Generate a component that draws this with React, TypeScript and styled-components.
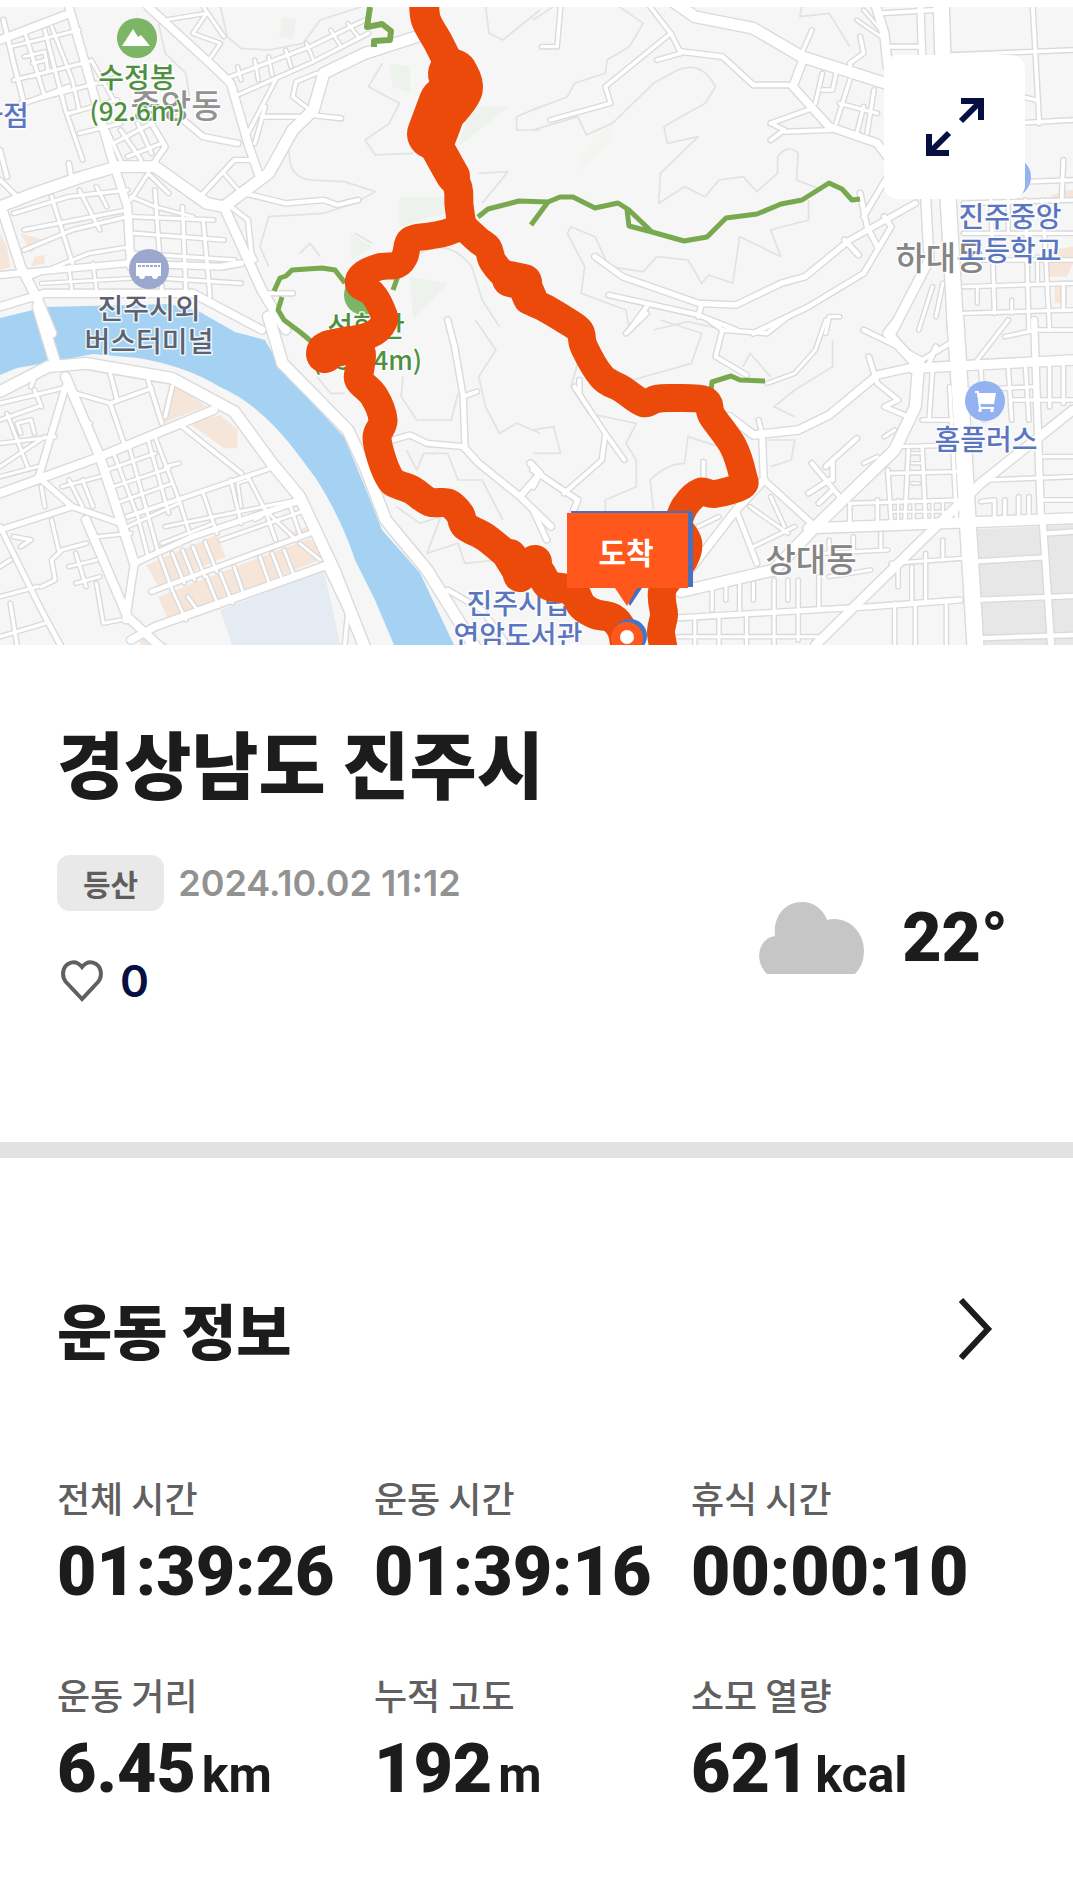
import React from "react";
import styled, { createGlobalStyle } from "styled-components";

const GlobalStyle = createGlobalStyle`
  *, *::before, *::after { box-sizing: border-box; }
  body {
    margin: 0;
    background: #fff;
    color: #1c1c1c;
    font-family: Inter, "Noto Sans CJK KR", sans-serif;
  }
  button { font: inherit; color: inherit; border: 0; background: none; padding: 0; cursor: pointer; }
  h1, h2, dl, dd, dt, p { margin: 0; }
`;

const Page = styled.main`
  padding-top: 7px;
`;

const MapPanel = styled.section`
  position: relative;
  height: 638px;
  overflow: hidden;
  background: #f6f6f6;
`;

const MapCanvas = styled.svg`
  display: block;
  width: 100%;
  height: 100%;
`;

const ExpandButton = styled.button`
  position: absolute;
  top: 48px;
  right: 48px;
  display: grid;
  place-items: center;
  width: 141px;
  height: 144px;
  border-radius: 14px;
  background: #fff;
`;

const Summary = styled.section`
  padding: 72px 65px 136px 57px;
  border-bottom: 16px solid #e2e2e2;
`;

const Title = styled.h1`
  font: 900 73px/88px "Noto Sans CJK KR", sans-serif;
`;

const SummaryBody = styled.div`
  display: flex;
  justify-content: space-between;
  align-items: center;
  margin-top: 50px;
`;

const Details = styled.div`
  display: flex;
  flex-direction: column;
  align-items: flex-start;
  gap: 45px;
`;

const Meta = styled.div`
  display: flex;
  align-items: center;
  gap: 14px;
`;

const Chip = styled.span`
  padding: 0 26px;
  border-radius: 13px;
  background: #e9e9e9;
  color: #5e5e5e;
  font: 700 30px/56px "Noto Sans CJK KR", sans-serif;
`;

const DateTime = styled.time`
  color: #929292;
  font: 600 36px/48px Inter, sans-serif;
`;

const LikeButton = styled.button`
  display: flex;
  align-items: center;
  gap: 16px;
  padding-left: 3px;
  color: #050f42;
  font: 600 44px/50px Inter, sans-serif;
`;

const Weather = styled.div`
  display: flex;
  align-items: center;
  gap: 38px;
  padding-top: 14px;
`;

const Temperature = styled.span`
  font: 900 68px/72px Roboto, sans-serif;
`;

const Workout = styled.section`
  padding: 135px 65px 72px 57px;
`;

const WorkoutHeader = styled.header`
  display: flex;
  justify-content: space-between;
  align-items: center;
`;

const Heading = styled.h2`
  font: 900 60px/72px "Noto Sans CJK KR", sans-serif;
`;

const MoreButton = styled.button`
  display: grid;
  place-items: center;
  width: 64px;
  height: 72px;
`;

const Stats = styled.dl`
  display: grid;
  grid-template-columns: repeat(3, 1fr);
  row-gap: 62px;
  margin-top: 108px;
`;

const Stat = styled.div`
  display: flex;
  flex-direction: column;
  gap: 15px;
`;

const StatLabel = styled.dt`
  color: #606060;
  font: 500 36px/48px "Noto Sans CJK KR", sans-serif;
`;

const StatValue = styled.dd`
  display: flex;
  align-items: baseline;
  gap: 6px;
  white-space: nowrap;
  font: 900 68px/72px Roboto, sans-serif;
`;

const Unit = styled.span`
  font-size: 50px;
  font-weight: 700;
`;

type Road = [width: number, d: string];
interface Tile {
  x: number;
  y: number;
  roads: Road[];
  contours: string;
  tints: [fill: string, d: string][];
}

/* Each tile covers 540 x 330 map units and keeps its own finer grid. */
const TILE_SCALE = "scale(0.3444 0.3333)";

const tiles: Tile[] = [
  {
    x: 0,
    y: 0,
    tints: [
      ["#eef2ec", "M1370,320 L1480,318 L1330,440z M1130,190 L1190,200 V280 L1140,260z M1160,590 H1290 V640 L1160,680z M1020,700 L1080,740 L1020,780z M820,50 L860,60 L850,120 L810,110z M1190,830 L1300,850 L1200,960z"],
      ["#f6e6da", "M0,700 L20,740 L30,800 L0,810z M60,700 L130,720 L90,760z M100,770 L130,765 L130,790 L90,800z"],
    ],
    contours:
      "M640,20 L660,110 L700,145 L780,150 L880,130 L930,60 L1050,20 M840,450 Q835,530 900,540 L1000,545 L1090,575 L1030,610 L940,640 L780,650 L755,740 L780,800 M1110,190 L1070,260 L1160,310 L1130,370 L1060,420 L1090,465 L1200,460 M1390,520 L1475,515 L1400,610 M1568,320 L1500,350 L1500,390 L1568,390 M1410,20 L1420,100 L1460,120 L1568,30 M1220,760 Q1300,710 1370,800 L1400,900 L1450,980 M460,70 L480,160 L540,220 L550,290 M1030,700 L1080,730 M870,760 L900,730 L930,770",
    roads: [
      [26, "M650,620 L760,870 L830,990"],
      [32, "M0,620 L100,580 L240,530 L340,500 L450,500 L600,610 L650,620"],
      [32, "M650,620 L780,520 L850,390 L910,330 L940,220 L1060,160 L1210,110"],
      [22, "M430,20 L620,200 L670,250 L720,430 L750,520"],
      [22, "M200,20 L250,200 L320,460 L370,620 L380,800"],
      [22, "M0,120 L190,45"],
      [26, "M10,640 L60,800 L110,900 L150,1000"],
      [18, "M0,825 L370,790 L640,800 L700,790"],
      [22, "M0,920 L130,880 L560,880 L760,990"],
      [12, "M10,60 L40,190 L70,310 L200,260"],
      [10, "M70,90 L130,290"],
      [10, "M130,90 L190,330 L240,480"],
      [9, "M150,80 L210,240 L230,330"],
      [9, "M30,140 L230,90"],
      [9, "M70,170 L130,155 L140,215 L90,230 M95,190 L135,180"],
      [10, "M40,240 L260,185"],
      [10, "M60,310 L280,250"],
      [10, "M200,340 L340,300"],
      [10, "M230,400 L350,370"],
      [9, "M265,180 L330,300 M290,250 L340,230"],
      [10, "M310,390 L350,480 M330,430 L440,370 M370,470 L470,430"],
      [10, "M350,390 L410,480 M400,370 L440,460"],
      [14, "M440,370 L480,440 L440,500"],
      [16, "M520,350 L590,410 L690,430"],
      [9, "M480,60 L600,40 L560,100 L640,130 L600,190"],
      [9, "M590,20 L650,110"],
      [10, "M670,230 L900,140 L1060,60"],
      [10, "M690,285 L900,190 L1070,100"],
      [8, "M690,200 L700,240 M740,180 L750,240 M780,170 L790,225 M830,150 L845,200 M890,130 L910,180 M960,90 L990,140 M1010,70 L1040,110"],
      [10, "M720,400 L800,240 M740,430 L770,320"],
      [12, "M760,350 L870,350 M900,345 L990,355"],
      [10, "M920,220 L860,245 L850,290 L900,330"],
      [12, "M590,580 L680,480 L730,480"],
      [9, "M650,520 L700,580"],
      [13, "M710,580 L830,610 L940,600 L980,615 L1040,600"],
      [12, "M670,620 L720,660 L730,760 L740,780"],
      [12, "M760,880 L850,880"],
      [12, "M0,540 L50,590 M0,450 L20,530 M200,490 L210,550"],
      [10, "M40,640 L200,590 L370,570"],
      [10, "M70,690 L370,630"],
      [10, "M70,750 L210,690 L370,650"],
      [10, "M90,830 L260,760 L380,740"],
      [10, "M150,590 L210,790"],
      [9, "M230,570 L290,690 M280,560 L310,620"],
      [10, "M380,650 L620,660 M390,700 L650,720 M390,760 L680,780 M400,830 L700,850"],
      [10, "M380,600 L430,520 L490,580 M450,570 L470,870 M530,620 L540,880 M590,660 L610,890"],
      [8, "M120,850 L380,835 M200,800 L210,880 M270,790 L280,870"],
      [9, "M380,590 L450,620 L560,650"],
    ],
  },
  {
    x: 533,
    y: 0,
    tints: [
      ["#f6e6da", "M1500,590 L1540,570 H1568 V600 H1500z M1500,750 L1568,740 V790 L1550,830 H1490z M1515,860 H1550 V910 H1515z"],
      ["#f2f5f0", "M230,360 L230,420 L120,530 L150,450z"],
    ],
    contours:
      "M0,330 L100,290 L120,250 L210,220 L215,180 L280,140 L320,70 L250,20 M0,390 L130,350 L155,405 L230,370 L350,250 L420,210 Q490,180 530,260 L500,310 L380,380 L390,430 L480,410 L370,520 L365,610 L440,560 L500,590 L540,540 L610,530 L650,575 L710,520 V470 Q740,430 770,460 L765,540 L840,570 M800,600 V660 L690,690 L720,770 L600,710 L580,850 L510,825 L490,850 L450,780 L360,770 L320,815 L220,800 L180,710 L110,680 L100,700 L150,800 L140,880 L270,930 L280,990 M780,20 L775,50 L860,40 L920,140 M0,60 L60,20 M350,990 L450,965 L560,990",
    roads: [
      [32, "M400,0 L470,50 L640,85 L780,170 L1040,255"],
      [24, "M990,0 L1020,100 L1030,200"],
      [44, "M1185,0 L1200,500 L1228,1000"],
      [22, "M780,190 L755,260 L860,380 L1000,430 L1050,500"],
      [11, "M340,20 L400,100 L210,260 L225,310 L50,360"],
      [11, "M400,100 L430,160 L360,180"],
      [14, "M430,155 L550,170 L640,255 L750,255"],
      [10, "M80,20 L70,140 L25,140"],
      [10, "M810,90 L780,160"],
      [11, "M950,110 L960,160 L920,190 L925,230"],
      [12, "M690,370 L810,325 M690,370 L730,390 L690,420 M730,395 L870,390"],
      [10, "M820,310 L840,220 M880,370 L920,240 M840,270 L870,270 L880,220 M890,310 L1000,340 M940,400 L960,320 M970,400 L990,270"],
      [12, "M1010,40 L1170,30 M1020,140 L1130,140 M1020,160 V140"],
      [18, "M1125,20 L1130,170"],
      [8, "M960,30 L1010,90 M940,60 L1010,110"],
      [11, "M1215,165 L1568,150 M1450,0 L1470,370 M1215,380 L1568,360 M1420,290 L1460,300"],
      [16, "M180,770 L260,830 L480,910 L590,915 L720,850 L790,830 L920,720 L1110,610"],
      [13, "M220,885 L480,945 L590,990 M490,910 L480,950 M330,920 L280,990"],
      [14, "M640,1000 L800,920 L960,820 L1040,680 L1020,650"],
      [14, "M1040,510 L960,650 M905,720 L945,765 M950,580 L970,680 L1000,740"],
      [26, "M1140,590 L1150,780 L1040,1000"],
      [9, "M1160,860 L1120,990 M1190,850 L1170,950"],
      [11, "M1250,610 L1568,600 M1440,545 L1568,540 M1540,480 L1535,600"],
      [10, "M1250,700 H1568 M1250,780 H1568 M1250,860 L1568,850 M1250,940 L1568,930"],
      [10, "M1330,600 L1340,940 M1430,600 L1440,990 M1480,600 L1500,990 M1540,850 V930"],
      [8, "M1290,860 V910 M1390,900 V940 M1380,600 V700 M1465,770 V850"],
      [10, "M850,1000 L860,950 L890,950"],
    ],
  },
  {
    x: 0,
    y: 320,
    tints: [
      ["#e4ebf3", "M640,870 L940,750 L990,980 L675,980z"],
      ["#f6e6da", "M550,310 L640,285 L690,330 V370 L690,385 L650,385z M500,190 L600,260 L520,290 L465,315 L480,240z M425,735 L630,645 L655,710 L460,800z M460,830 L900,655 L940,715 L490,905z M840,640 L890,620 L900,640 L850,655z M390,920 L490,975 H410z"],
    ],
    contours:
      "M1170,170 L1165,230 L1210,300 L1310,300 L1330,220 M1180,390 L1210,450 L1230,400 L1300,400 L1330,480 L1400,480 L1460,600 M1380,0 L1440,90 L1390,170 L1410,260 L1450,340 L1500,310 L1568,340 M1150,560 L1220,610 L1280,590 L1240,700 L1330,670 L1350,730 L1440,720 M920,170 L960,220 L1000,220",
    roads: [
      [32, "M780,-10 L820,130 L1010,330 L1060,440 L1120,600 L1240,750 L1300,850 L1390,1000"],
      [32, "M0,215 L140,140 L250,130 L500,175 L680,275 L790,430 L870,530 L970,750 L1060,985"],
      [30, "M110,-40 L160,130"],
      [26, "M190,170 L290,410 L350,600 L390,730"],
      [18, "M190,200 L110,480"],
      [24, "M0,520 L290,410 L620,270"],
      [16, "M0,630 L210,560 M110,470 L210,560 L350,610"],
      [14, "M0,620 L120,870 L180,985"],
      [24, "M250,600 L370,890 L470,985"],
      [20, "M390,730 L365,900"],
      [16, "M390,730 L560,650 L880,540"],
      [14, "M440,815 L660,730 L900,640"],
      [22, "M380,960 L450,920 L950,735"],
      [12, "M530,320 L700,460 M370,590 L800,440"],
      [9, "M310,450 L450,400 M330,500 L490,445 M350,545 L500,490 M370,620 L520,550"],
      [9, "M330,400 L400,590 L430,710 M375,380 L460,700 M430,360 L490,580"],
      [9, "M450,350 L520,540 L550,640 M480,440 L520,430 M590,520 L630,640 M670,480 L700,610 M720,470 L770,570 L800,660"],
      [9, "M480,620 L860,540 M470,670 L620,610 M640,660 L890,570 M780,580 L860,660 M840,550 L870,640"],
      [8, "M465,710 L500,810 M500,700 L535,790 M530,690 L565,780 M560,680 L595,770 M595,665 L630,755"],
      [8, "M500,810 L540,900 M545,830 L580,880 M600,770 L635,860 M640,760 L675,850 M680,740 L710,830 M755,710 L785,800 M790,700 L820,780 M825,690 L855,770 M870,670 L930,720"],
      [11, "M220,220 L320,250 L440,205 M320,160 L340,240 M320,250 L360,370 M430,180 L470,310 M500,200 L480,290"],
      [10, "M0,250 L180,205 M100,210 L120,260 M0,300 L110,260 M90,200 L110,150"],
      [9, "M0,440 L130,350 M0,370 L160,350 M20,280 L80,440 M60,340 L50,310 L90,300 L100,340 M0,470 L110,440"],
      [10, "M40,650 L90,660 L60,680 M120,800 L160,780 L150,720 L180,690 L250,670 M0,830 L110,800 M0,950 L130,910 M30,850 L50,980 M0,740 L30,720"],
      [9, "M200,740 L280,720 M220,790 L290,770 M280,790 L300,910 L350,900 M220,700 L250,800 M150,600 L170,690"],
      [9, "M180,500 L290,470 M240,480 L270,560 M200,480 L240,560 M280,650 L380,640 M120,500 L130,560"],
      [11, "M950,750 L1010,880 L1000,985"],
      [15, "M1140,360 L1190,345 L1240,370 L1350,380 L1345,230 L1320,80 L1300,0"],
      [12, "M1345,230 L1385,215"],
      [18, "M1350,385 L1390,430 L1510,530 L1600,620 M1510,530 L1568,460 M1540,430 L1568,460"],
      [14, "M1300,810 L1400,870 L1480,985"],
      [7, "M240,300 L265,310 M700,560 L690,490 L720,480 M740,600 L760,590"],
    ],
  },
  {
    x: 533,
    y: 320,
    tints: [["#e7e7e7", "M1285,628 L1568,615 V980 H1300z"]],
    contours:
      "M130,130 L110,200 L160,280 L300,310 L270,370 L300,420 L300,500 L210,540 V580 M350,570 L340,480 Q390,430 440,430 L450,350 L540,380 M0,330 L60,320 L80,400 L0,400 M610,140 L630,100 L690,170 M870,60 L870,140 L760,210 L700,260 L760,290 M680,360 L760,360 L750,420 L690,440 M370,0 L490,40 L460,130 L290,180",
    roads: [
      [46, "M1226,-10 L1245,300 L1262,600 L1285,985"],
      [26, "M1060,0 L1030,40 L1110,130"],
      [32, "M1120,130 L1110,260 L1050,390 L820,620 L700,750 L430,815"],
      [28, "M1100,145 L1568,120"],
      [22, "M1110,140 L1000,165 L860,285 L770,330 L640,345 L570,290"],
      [17, "M665,340 L670,480 L830,630"],
      [22, "M670,480 L590,570 L440,770"],
      [14, "M590,570 L650,730"],
      [30, "M800,625 L1568,595"],
      [26, "M820,975 L1130,660 L1300,490 L1568,270"],
      [15, "M400,895 L980,860 L1240,840"],
      [18, "M1480,600 L1505,985"],
      [13, "M1275,725 L1485,712 M1280,840 L1568,828 M1290,955 L1568,945 M1490,640 L1568,635"],
      [18, "M1455,0 L1475,600"],
      [10, "M1290,120 L1380,0 M1370,50 L1460,30 L1568,30 M1380,140 L1390,300"],
      [10, "M1300,140 L1310,300 M1260,210 L1460,200 M1390,240 H1568 M1430,140 L1440,300 M1500,130 V260 M1540,130 V250"],
      [10, "M1480,410 H1568 M1320,480 L1568,470 M1480,540 H1568 M1300,545 L1340,540 V590 M1370,540 V590 M1410,530 V590 M1440,530 V590"],
      [10, "M1130,300 H1230 M1060,380 L1240,375 M1030,460 L1245,455 M920,550 L1250,540"],
      [10, "M1130,380 L1140,600 M1030,450 L1040,600 M1090,390 L1080,600 M1160,150 L1150,300 M1210,200 L1230,600 M920,550 V620 M1000,540 V600"],
      [6, "M1040,575 H1230 M1100,400 H1125 M1100,430 H1125 M1100,490 H1120 M1060,540 V600 M1105,540 V600 M1160,540 V600 M1190,540 V600"],
      [13, "M960,30 L1040,70 L1130,120 L1210,70 M1150,130 L1170,80"],
      [13, "M975,110 L1000,190 L1060,240 L1020,260 L1090,290"],
      [12, "M270,40 L330,-20 M510,0 L550,30 L680,40 L740,-10 M550,30 L530,110 L620,165"],
      [9, "M850,0 L820,90 L760,160 L680,190"],
      [12, "M120,200 L210,340 L200,420 L90,520 M210,340 L265,420 M135,180 V220"],
      [15, "M0,450 L130,540 L110,590 M0,500 L20,460 M0,570 L40,660"],
      [11, "M495,425 V490 M655,300 L665,340"],
      [13, "M810,430 L890,530 M850,440 L870,420 L940,355 M870,420 L870,480 M800,520 L860,480 M830,550 L870,510"],
      [9, "M960,430 L1000,410 M1020,350 L1050,330 M480,620 L540,590 M630,560 L740,640 M640,680 L760,620 M690,530 L730,620"],
      [9, "M520,800 V870 M600,790 V870 M700,780 V880 M770,780 V870 M830,770 V860 M560,840 V800 M640,840 V790 M740,840 V780 M860,770 L980,750"],
      [9, "M420,950 H830 M470,890 V985 M540,890 V985 M620,880 V985 M700,880 V985 M770,880 V960"],
      [9, "M840,700 L1030,690 M860,660 V700 M930,650 V695 M1010,640 V690 M1040,730 L1250,715 M1060,740 V800 M1100,740 V840 M1140,700 V840 M1190,660 V720 M1050,850 V985 M1110,850 V985 M1200,850 V985"],
    ],
  },
];

const tileTransform = (t: Tile) => `translate(${t.x} ${t.y}) ${TILE_SCALE}`;

/* Turns a list of track points into a Catmull-Rom curve. */
const smoothTrack = (points: string) => {
  const p = points.split(" ").map((s) => s.split(",").map(Number));
  let d = `M${p[0].join()}`;
  for (let i = 0; i < p.length - 1; i++) {
    const a = p[i - 1] ?? p[i];
    const b = p[i];
    const c = p[i + 1];
    const e = p[i + 2] ?? c;
    d += ` C${b[0] + (c[0] - a[0]) / 6},${b[1] + (c[1] - a[1]) / 6}`;
    d += ` ${c[0] - (e[0] - b[0]) / 6},${c[1] - (e[1] - b[1]) / 6} ${c.join()}`;
  }
  return d;
};

const track: [width: number, points: string][] = [
  [30, "424,0 426,20 438,42 448,62"],
  [50, "453,74 458,88 447,104"],
  [50, "444,102 438,118 432,134"],
  [34, "433,140 444,160 453,176"],
  [29, "449,168 458,188 459,205 462,226"],
  [27, "461,227 445,233 430,236 410,240 405,256 397,265 379,267 362,275 359,285 372,293 382,310 384,322 370,335 328,344"],
  [38, "325,354 328,350 350,345"],
  [29, "350,345 361,352 360,368 359,380 374,396 383,420 377,437 382,460 391,480 399,485 412,490 430,502 448,503 460,514 465,526 485,537 505,553"],
  [34, "510,556 520,572"],
  [34, "520,575 535,562"],
  [30, "520,566 538,570 548,585 562,588 574,592 582,606 595,614 612,618 622,630 626,650"],
  [28, "463,226 478,240 488,248 493,262 508,278 526,284 530,300 545,308 565,320 580,331 584,347 602,377 622,389 643,403 656,399 670,398 705,400 712,416 733,446 743,476 742,486 715,494 700,492 685,506 677,525"],
  [36, "510,279 524,282"],
  [34, "524,284 530,298"],
  [28, "677,525 688,542 684,560 664,586 662,600 664,615 661,632 664,650"],
];

const halo = {
  stroke: "#fff",
  strokeWidth: 3,
  strokeOpacity: 0.8,
  paintOrder: "stroke" as const,
  strokeLinejoin: "round" as const,
};

interface LabelProps {
  x: number;
  y: number;
  size?: number;
  fill: string;
  children: string;
}

const MapLabel = ({ x, y, size = 28, fill, children }: LabelProps) => (
  <text x={x} y={y} fontSize={size} fill={fill} textAnchor="middle" {...halo}>
    {children}
  </text>
);

const RouteMap = () => (
  <MapCanvas viewBox="0 7 1073 638" preserveAspectRatio="xMidYMid slice" role="img" aria-label="운동 경로 지도">
    <rect y="7" width="1073" height="638" fill="#f6f6f6" />
    {tiles.map((t) => (
      <g key={`${t.x}-${t.y}`} transform={tileTransform(t)}>
        {t.tints.map(([fill, d]) => (
          <path key={d} fill={fill} d={d} />
        ))}
        <path d={t.contours} fill="none" stroke="#e2e2de" strokeWidth="5" strokeLinejoin="round" />
      </g>
    ))}
    <path
      d="M0,318 L45,307 L170,304 L200,312 L235,332 L265,340 L282,370 L344,437 L365,487 L382,530 L420,573 L454,645 H394 L375,600 L355,560 Q342,520 317,480 L300,457 Q262,405 220,387 Q186,366 138,358 L93,354 L52,362 L17,368 L0,375z"
      fill="#a5d2f3"
    />
    <g fill="none" strokeLinejoin="round" strokeLinecap="round">
      {tiles.map((t) => (
        <g key={`${t.x}-${t.y}`} transform={tileTransform(t)} stroke="#dadada">
          {t.roads.map(([w, d]) => (
            <path key={d} d={d} strokeWidth={w + 8} />
          ))}
        </g>
      ))}
      {tiles.map((t) => (
        <g key={`${t.x}-${t.y}`} transform={tileTransform(t)} stroke="#fff">
          {t.roads.map(([w, d]) => (
            <path key={d} d={d} strokeWidth={w} />
          ))}
        </g>
      ))}
    </g>

    <circle cx="364" cy="295" r="20" fill="#7db567" />
    <g fill="none" stroke="#78a94e" strokeWidth="5" strokeLinejoin="round">
      <path d="M370,7 L367,27 L382,24 L391,31 L390,40 L374,41 L374,47" strokeWidth="6" />
      <path d="M274,291 L280,278 L286,276 L292,270 L322,268 L335,270 L345,283" />
      <path d="M282,297 L278,310 L284,320 L300,332 L312,342" />
      <path d="M398,276 L393,290" />
      <path d="M478,217 L488,209 L519,201 L548,202 L560,197 L573,197 L595,208 L618,203 L629,210 L652,232 L684,241 L707,237 L726,218 L757,214 L781,204 L802,200 L829,183 L842,189 L852,200 L860,199" />
      <path d="M548,202 L531,225 M627,210 L629,226 L652,232" />
      <path d="M711,391 L712,382 L731,376 L740,380 L765,381" />
      <path d="M528,310 L548,322" />
    </g>

    <g fontFamily='"Noto Sans CJK KR", sans-serif' fontWeight="500">
      <MapLabel x={176} y={118} size={33} fill="#929292">중앙동</MapLabel>
      <MapLabel x={137} y={88} fill="#4d9040">수정봉</MapLabel>
      <MapLabel x={137} y={121} size={26} fill="#4d9040">(92.6m)</MapLabel>
      <MapLabel x={3} y={126} fill="#5b76c0">마점</MapLabel>
      <MapLabel x={149} y={319} fill="#5d6270">진주시외</MapLabel>
      <MapLabel x={149} y={352} fill="#5d6270">버스터미널</MapLabel>
      <MapLabel x={366} y={337} fill="#4d9040">선학산</MapLabel>
      <MapLabel x={367} y={370} size={26} fill="#4d9040">(135.4m)</MapLabel>
      <MapLabel x={941} y={270} size={33} fill="#858585">하대동</MapLabel>
      <MapLabel x={1010} y={227} fill="#5b76c0">진주중앙</MapLabel>
      <MapLabel x={1010} y={261} fill="#5b76c0">고등학교</MapLabel>
      <MapLabel x={986} y={450} fill="#5b76c0">홈플러스</MapLabel>
      <MapLabel x={811} y={572} size={33} fill="#858585">상대동</MapLabel>
      <MapLabel x={518} y={614} fill="#5b76c0">진주시립</MapLabel>
      <MapLabel x={518} y={646} fill="#5b76c0">연암도서관</MapLabel>
    </g>

    <circle cx="137" cy="38" r="20" fill="#7db567" />
    <path d="M122,46 L133,29 L138,37 L141,35 L150,46z" fill="#fff" />
    <circle cx="149" cy="269" r="20" fill="#9ba7cd" />
    <path d="M136,263 H161 V276 H158 A3,3 0 0 1 152,276 H145 A3,3 0 0 1 139,276 H136z" fill="#fff" />
    <path d="M138,266 H160" stroke="#9ba7cd" strokeWidth="2" strokeDasharray="3 1" />
    <circle cx="1011" cy="177" r="20" fill="#93b2f2" />
    <circle cx="985" cy="401" r="20" fill="#93b2f2" />
    <path d="M977,393 H996 L994,404 H979z" fill="#fff" />
    <path d="M975,392 H978 L980,408 H994" fill="none" stroke="#fff" strokeWidth="2" />
    <path d="M980,409 v3 M992,409 v3" stroke="#fff" strokeWidth="3" />

    <g fill="none" stroke="#ec4a0a" strokeLinejoin="round" strokeLinecap="round">
      {track.map(([width, points]) => (
        <path key={points} d={smoothTrack(points)} strokeWidth={width} />
      ))}
    </g>

    <path d="M571,511 H693 V587 H571z" fill="#4a70bd" />
    <path d="M620,588 H642 L630,606z" fill="#4a70bd" />
    <circle cx="630" cy="636" r="17" fill="#3f76c9" />
    <path d="M567,513 H688 V588 H637 L627,606 L615,588 H567z" fill="#ff571c" />
    <circle cx="627" cy="638" r="16" fill="#ff571c" />
    <circle cx="627" cy="637" r="7" fill="#fff" />
    <text x="626" y="564" fontSize="30" fontWeight="700" fill="#fff" textAnchor="middle" fontFamily='"Noto Sans CJK KR", sans-serif'>
      도착
    </text>
  </MapCanvas>
);

const ExpandIcon = () => (
  <svg width="58" height="58" viewBox="0 0 58 58" fill="none" stroke="#050f42" strokeWidth="6" aria-hidden="true">
    <path d="M35,3 H55 V22 M54,4 L35,23" />
    <path d="M3,36 V55 H23 M4,54 L23,35" />
  </svg>
);

const HeartIcon = () => (
  <svg width="44" height="46" viewBox="0 0 44 46" fill="none" stroke="#606060" strokeWidth="4" aria-hidden="true">
    <path d="M22,41 L6,24 C1,18 3,9 8,6 C13,3 18,4 22,9 C26,4 31,3 36,6 C41,9 43,18 38,24 Z" />
  </svg>
);

const CloudIcon = () => (
  <svg width="105" height="72" viewBox="0 0 105 72" fill="#c6c6c6" aria-hidden="true">
    <path d="M8,72 C-6,58 0,36 16,34 C14,14 26,0 43,0 C55,0 64,7 68,18 C87,13 105,28 105,49 Q105,63 96,72z" />
  </svg>
);

const ChevronIcon = () => (
  <svg width="34" height="62" viewBox="0 0 34 62" fill="none" stroke="#1c1c1c" strokeWidth="6" aria-hidden="true">
    <path d="M2,2 L29,31 L2,60" />
  </svg>
);

const stats = [
  { label: "전체 시간", value: "01:39:26" },
  { label: "운동 시간", value: "01:39:16" },
  { label: "휴식 시간", value: "00:00:10" },
  { label: "운동 거리", value: "6.45", unit: "km" },
  { label: "누적 고도", value: "192", unit: "m" },
  { label: "소모 열량", value: "621", unit: "kcal" },
];

export default function App() {
  return (
    <Page>
      <GlobalStyle />
      <MapPanel>
        <RouteMap />
        <ExpandButton type="button" aria-label="지도 확대">
          <ExpandIcon />
        </ExpandButton>
      </MapPanel>

      <Summary>
        <Title>경상남도 진주시</Title>
        <SummaryBody>
          <Details>
            <Meta>
              <Chip>등산</Chip>
              <DateTime dateTime="2024-10-02T11:12">2024.10.02 11:12</DateTime>
            </Meta>
            <LikeButton type="button" aria-label="좋아요 0">
              <HeartIcon />
              <span>0</span>
            </LikeButton>
          </Details>
          <Weather>
            <CloudIcon />
            <Temperature>22°</Temperature>
          </Weather>
        </SummaryBody>
      </Summary>

      <Workout>
        <WorkoutHeader>
          <Heading>운동 정보</Heading>
          <MoreButton type="button" aria-label="운동 정보 더보기">
            <ChevronIcon />
          </MoreButton>
        </WorkoutHeader>
        <Stats>
          {stats.map((s) => (
            <Stat key={s.label}>
              <StatLabel>{s.label}</StatLabel>
              <StatValue>
                {s.value}
                {s.unit && <Unit>{s.unit}</Unit>}
              </StatValue>
            </Stat>
          ))}
        </Stats>
      </Workout>
    </Page>
  );
}
